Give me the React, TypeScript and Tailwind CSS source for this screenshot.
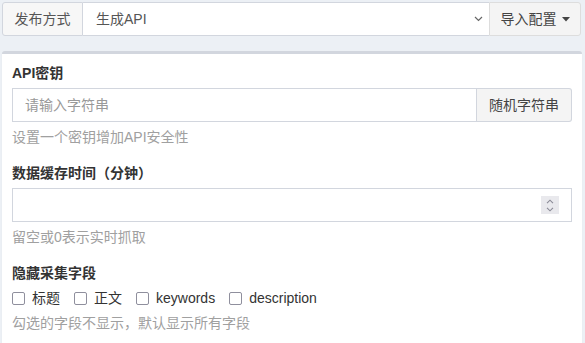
import React from "react";

const font = { fontFamily: '"Liberation Sans","Noto Sans CJK SC",sans-serif' };

function Check({ label }: { label: string }) {
  return (
    <label className="flex items-center gap-[7px] mr-[14px]">
      <span className="w-[13px] h-[13px] border border-[#8f8f9d] rounded-[2px] bg-white" />
      <span className="text-[14px] leading-[20px] text-[#333]">{label}</span>
    </label>
  );
}

export default function App() {
  return (
    <div className="w-[585px] h-[343px] overflow-hidden bg-[#ecf0f5]" style={font}>
      <div className="pt-[2px] pl-[2px] pr-[4px]">
        <div className="flex h-[34px]">
          <div className="w-[81px] flex items-center justify-center border border-[#d2d6de] bg-[#f7f7f7] text-[14px] text-[#555] rounded-l-[3px]">
            发布方式
          </div>
          <div className="flex-1 flex items-center justify-between border-y border-[#d2d6de] bg-white pl-[13px] pr-[6px] text-[14px] text-[#555]">
            <span>生成API</span>
            <svg width="9" height="6" viewBox="0 0 9 6">
              <path d="M1 1l3.5 3.5L8 1" fill="none" stroke="#666" strokeWidth="1.2" />
            </svg>
          </div>
          <div className="w-[92px] flex items-center justify-center gap-[5px] border border-[#ddd] bg-[#f4f4f4] text-[14px] text-[#444] rounded-r-[3px]">
            <span>导入配置</span>
            <svg width="8" height="5" viewBox="0 0 8 5">
              <path d="M0 0h8L4 4.5z" fill="#444" />
            </svg>
          </div>
        </div>
      </div>
      <div className="mt-[15px] ml-[2px] mr-[3px] bg-white border-t-[3px] border-[#d2d6de] rounded-[3px] shadow-[0_1px_1px_rgba(0,0,0,0.1)] px-[10px] pt-[9px] pb-[20px]">
        <div>
          <div className="text-[14px] leading-[20px] font-bold text-[#333]">API密钥</div>
          <div className="mt-[5px] flex h-[34px]">
            <div className="flex-1 flex items-center border border-[#d2d6de] pl-[12px] text-[14px] text-[#999]">
              请输入字符串
            </div>
            <div className="w-[95px] flex items-center justify-center border border-l-0 border-[#d2d6de] bg-[#f4f4f4] text-[14px] text-[#444] rounded-r-[3px]">
              随机字符串
            </div>
          </div>
          <div className="mt-[5px] text-[14px] leading-[20px] text-[#a0a0a0]">设置一个密钥增加API安全性</div>
        </div>
        <div className="mt-[16px]">
          <div className="text-[14px] leading-[20px] font-bold text-[#333]">数据缓存时间（分钟）</div>
          <div className="mt-[5px] relative h-[34px] border border-[#d2d6de] bg-white">
            <div className="absolute right-[12px] top-[7px] w-[18px] h-[18px] bg-[#e9e9ed] flex flex-col items-center justify-center gap-[3px]">
              <svg width="8" height="5" viewBox="0 0 8 5">
                <path d="M1 4.2L4 1.2l3 3" fill="none" stroke="#8a8a96" strokeWidth="1.1" />
              </svg>
              <svg width="8" height="5" viewBox="0 0 8 5">
                <path d="M1 0.8l3 3 3-3" fill="none" stroke="#8a8a96" strokeWidth="1.1" />
              </svg>
            </div>
          </div>
          <div className="mt-[5px] text-[14px] leading-[20px] text-[#a0a0a0]">留空或0表示实时抓取</div>
        </div>
        <div className="mt-[16px]">
          <div className="text-[14px] leading-[20px] font-bold text-[#333]">隐藏采集字段</div>
          <div className="mt-[5px] flex items-center h-[20px]">
            <Check label="标题" />
            <Check label="正文" />
            <Check label="keywords" />
            <Check label="description" />
          </div>
          <div className="mt-[5px] text-[14px] leading-[20px] text-[#a0a0a0]">勾选的字段不显示，默认显示所有字段</div>
        </div>
      </div>
    </div>
  );
}
